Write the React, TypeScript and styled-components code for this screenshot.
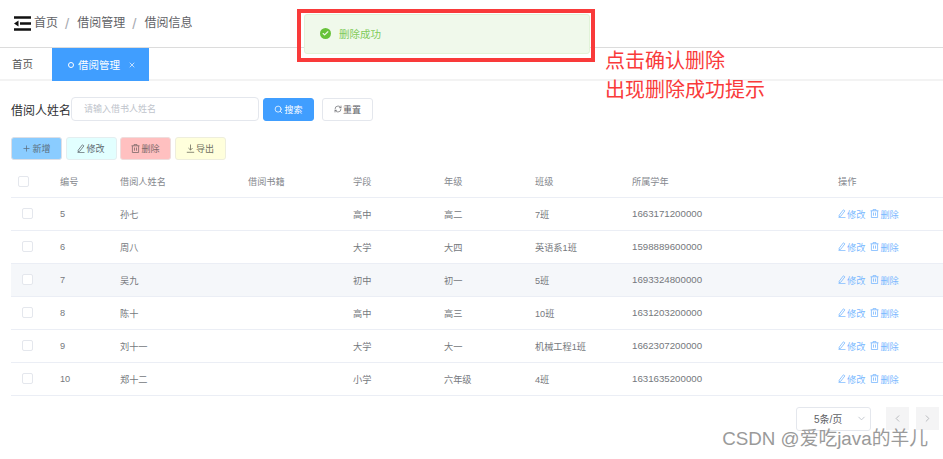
import React from 'react'
import styled, { createGlobalStyle } from 'styled-components'
import { ChevronDown, ChevronLeft, ChevronRight, Check, Plus, RefreshCw, Search, X } from 'lucide-react'

const GlobalStyle = createGlobalStyle`
  html, body {
    margin: 0;
    background: #fff;
    font-family: "Liberation Sans", "Noto Sans CJK SC", sans-serif;
    overflow: hidden;
  }
  * { box-sizing: border-box; }
`

const Page = styled.div`
  position: relative;
  width: 943px;
  height: 459px;
  overflow: hidden;
  color: #606266;
`

const Header = styled.div`
  height: 48px;
  border-bottom: 1px solid #dcdcdc;
  display: flex;
  align-items: center;
  padding: 0 0 0 14px;
`
const Crumb = styled.span`
  font-size: 12px;
  line-height: 17px;
  color: #5f6266;
  margin-left: 3px;
`
const Slash = styled.span`
  font-size: 15px;
  line-height: 17px;
  color: #a8abb2;
  margin: 0 5px 0 7px;
`

const TabBar = styled.div`
  height: 33px;
  border-bottom: 2px solid #f3f3f3;
  display: flex;
`
const HomeTab = styled.div`
  width: 52px;
  padding-left: 12px;
  font-size: 10.5px;
  line-height: 33px;
  color: #555;
`
const ActiveTab = styled.div`
  width: 97px;
  height: 33px;
  background: #409eff;
  color: #fff;
  display: flex;
  align-items: center;
  font-size: 10.5px;
  padding-left: 16px;
  gap: 4px;
`
const Dot = styled.span`
  width: 6px;
  height: 6px;
  border: 1px solid #fff;
  border-radius: 50%;
`

const SearchRow = styled.div`
  display: flex;
  align-items: center;
  height: 24px;
  margin: 16px 0 0 11px;
`
const FieldLabel = styled.label`
  font-size: 12px;
  width: 60px;
  color: #303133;
  white-space: nowrap;
`
const FakeInput = styled.div`
  width: 188px;
  height: 24px;
  border: 1px solid #e4e7ed;
  border-radius: 4px;
  font-size: 9px;
  line-height: 22px;
  padding-left: 12px;
  color: #c0c4cc;
`
const Btn = styled.div<{ $bg: string; $fg: string; $line: string }>`
  width: 51px;
  height: 23px;
  background: ${p => p.$bg};
  color: ${p => p.$fg};
  border: 1px solid ${p => p.$line};
  border-radius: 3px;
  font-size: 9px;
  display: flex;
  align-items: center;
  justify-content: center;
  gap: 1px;
`
const SearchBtn = styled(Btn)`
  margin-left: 4px;
`
const ResetBtn = styled(Btn)`
  margin-left: 8px;
`

const Actions = styled.div`
  display: flex;
  gap: 3.5px;
  margin: 16px 0 0 11px;
`

const Table = styled.table`
  width: 932px;
  margin: 6px 0 0 11px;
  border-collapse: collapse;
  table-layout: fixed;
  font-size: 9.2px;
`
const Th = styled.th<{ $w?: number }>`
  width: ${p => (p.$w ? `${p.$w}px` : 'auto')};
  height: 31px;
  text-align: left;
  font-weight: 400;
  color: #85888e;
  padding: 0;
  border-bottom: 1px solid #ebeef5;
`
const Row = styled.tr<{ $hover?: boolean }>`
  background: ${p => (p.$hover ? '#f5f7fa' : '#fff')};
`
const Td = styled.td`
  height: 33px;
  padding: 0;
  color: #75787d;
  border-bottom: 1px solid #ebeef5;
`
const YearTd = styled(Td)`
  font-size: 9.7px;
`
const Box = styled.span<{ $left: number }>`
  display: block;
  width: 11px;
  height: 11px;
  margin-left: ${p => p.$left}px;
  background: #fff;
  border: 1px solid #e4e7ed;
  border-radius: 2px;
`
const OpLink = styled.span`
  display: inline-flex;
  align-items: center;
  gap: 1px;
  color: #79b8ff;
  margin-right: 5px;
`

const Pager = styled.div`
  display: flex;
  justify-content: flex-end;
  align-items: center;
  margin-top: 11px;
  padding-right: 4px;
`
const PageSize = styled.div`
  width: 75px;
  height: 24px;
  border: 1px solid #e4e7ed;
  border-radius: 3px;
  font-size: 10px;
  color: #606266;
  display: flex;
  align-items: center;
  justify-content: space-between;
  padding: 0 3px 0 17px;
  margin-right: 8px;
`
const PageBtn = styled.div`
  width: 23px;
  height: 23px;
  background: #f4f4f5;
  color: #b4b6ba;
  display: flex;
  align-items: center;
  justify-content: center;
  margin-left: 7px;
`

const Toast = styled.div`
  position: absolute;
  left: 304px;
  top: 14px;
  width: 286px;
  height: 40px;
  background: #f0f9eb;
  border: 1px solid #e1f3d8;
  border-radius: 3px;
  display: flex;
  align-items: center;
  padding: 0 0 2px 15px;
  gap: 8px;
  font-size: 10.5px;
  color: #7fcb59;
`
const ToastIcon = styled.span`
  width: 11px;
  height: 11px;
  border-radius: 50%;
  background: #67c23a;
  color: #f0f9eb;
  display: flex;
  align-items: center;
  justify-content: center;
`
const RedFrame = styled.div`
  position: absolute;
  left: 297px;
  top: 9px;
  width: 298px;
  height: 53px;
  border: 4px solid #f93a3a;
`
const Note = styled.div`
  position: absolute;
  left: 605px;
  top: 47px;
  font-size: 20px;
  line-height: 29px;
  color: #f93a3a;
`
const Watermark = styled.div`
  position: absolute;
  right: 15px;
  top: 426px;
  font-size: 18.8px;
  line-height: 26px;
  color: #9a9a9a;
  white-space: nowrap;
`

const rows = [
  ['5', '孙七', '高中', '高二', '7班', '1663171200000'],
  ['6', '周八', '大学', '大四', '英语系1班', '1598889600000'],
  ['7', '吴九', '初中', '初一', '5班', '1693324800000'],
  ['8', '陈十', '高中', '高三', '10班', '1631203200000'],
  ['9', '刘十一', '大学', '大一', '机械工程1班', '1662307200000'],
  ['10', '郑十二', '小学', '六年级', '4班', '1631635200000'],
]

const MenuIcon = () => (
  <svg width="17" height="15" viewBox="0 0 17 15">
    <path d="M0 1.5h17M6 7.5h11M0 13.5h17" stroke="#111" strokeWidth="2.4" fill="none" />
    <path d="M0 7.5l4.5-3v6z" fill="#111" />
  </svg>
)

// element-ui style edit icon: slanted pencil over a short base line
const EditIcon = () => (
  <svg width="8" height="9" viewBox="0 0 8 9" fill="none" stroke="currentColor" strokeWidth="0.8">
    <path d="M1.2 6.2L5.4 0.8l1.5 1.1-4.2 5.4-1.7 0.3z" />
    <path d="M0.5 8.6h7" />
  </svg>
)

const TrashIcon = () => (
  <svg width="9" height="9" viewBox="0 0 9 9" fill="none" stroke="currentColor" strokeWidth="0.8">
    <path d="M0.5 1.8h8M3 1.8V0.6h3v1.2M1.4 1.8v6.7h6.2V1.8M3.5 3.5v3.2M5.5 3.5v3.2" />
  </svg>
)

const ExportIcon = () => (
  <svg width="9" height="9" viewBox="0 0 9 9" fill="none" stroke="currentColor" strokeWidth="0.8">
    <path d="M4.5 0.5v5.5M2.4 4l2.1 2.1L6.6 4M0.8 8.3h7.4" />
  </svg>
)

export default function App() {
  return (
    <Page>
      <GlobalStyle />
      <Header>
        <MenuIcon />
        <Crumb>首页</Crumb>
        <Slash>/</Slash>
        <Crumb>借阅管理</Crumb>
        <Slash>/</Slash>
        <Crumb>借阅信息</Crumb>
      </Header>
      <TabBar>
        <HomeTab>首页</HomeTab>
        <ActiveTab>
          <Dot />
          借阅管理
          <X size={8} style={{ marginLeft: 4 }} />
        </ActiveTab>
      </TabBar>

      <SearchRow>
        <FieldLabel>借阅人姓名</FieldLabel>
        <FakeInput>请输入借书人姓名</FakeInput>
        <SearchBtn $bg="#409eff" $fg="#fff" $line="#409eff"><Search size={9} />搜索</SearchBtn>
        <ResetBtn $bg="#fff" $fg="#606266" $line="#e4e7ed"><RefreshCw size={8} />重置</ResetBtn>
      </SearchRow>

      <Actions>
        <Btn $bg="#8accff" $fg="#5b6f80" $line="#dcdfe6"><Plus size={9} />新增</Btn>
        <Btn $bg="#e2ffff" $fg="#606a70" $line="#e4eef0"><EditIcon />修改</Btn>
        <Btn $bg="#ffc0c0" $fg="#7d6a6a" $line="#eedddd"><TrashIcon />删除</Btn>
        <Btn $bg="#ffffdc" $fg="#6f6f60" $line="#eeeedd"><ExportIcon />导出</Btn>
      </Actions>

      <Table>
        <thead>
          <tr>
            <Th $w={49}><Box $left={7} /></Th>
            <Th $w={60}>编号</Th>
            <Th $w={128}>借阅人姓名</Th>
            <Th $w={105}>借阅书籍</Th>
            <Th $w={91}>学段</Th>
            <Th $w={91}>年级</Th>
            <Th $w={97}>班级</Th>
            <Th $w={206}>所属学年</Th>
            <Th>操作</Th>
          </tr>
        </thead>
        <tbody>
          {rows.map((r, i) => (
            <Row key={r[0]} $hover={i === 2}>
              <Td><Box $left={11} /></Td>
              <Td>{r[0]}</Td>
              <Td>{r[1]}</Td>
              <Td />
              <Td>{r[2]}</Td>
              <Td>{r[3]}</Td>
              <Td>{r[4]}</Td>
              <YearTd>{r[5]}</YearTd>
              <Td>
                <OpLink><EditIcon />修改</OpLink>
                <OpLink><TrashIcon />删除</OpLink>
              </Td>
            </Row>
          ))}
        </tbody>
      </Table>

      <Pager>
        <PageSize>5条/页<ChevronDown size={11} color="#c0c4cc" /></PageSize>
        <PageBtn><ChevronLeft size={11} /></PageBtn>
        <PageBtn><ChevronRight size={11} /></PageBtn>
      </Pager>

      <RedFrame />
      <Toast>
        <ToastIcon><Check size={7} strokeWidth={4} /></ToastIcon>
        删除成功
      </Toast>
      <Note>
        点击确认删除
        <br />
        出现删除成功提示
      </Note>
      <Watermark>CSDN @爱吃java的羊儿</Watermark>
    </Page>
  )
}
